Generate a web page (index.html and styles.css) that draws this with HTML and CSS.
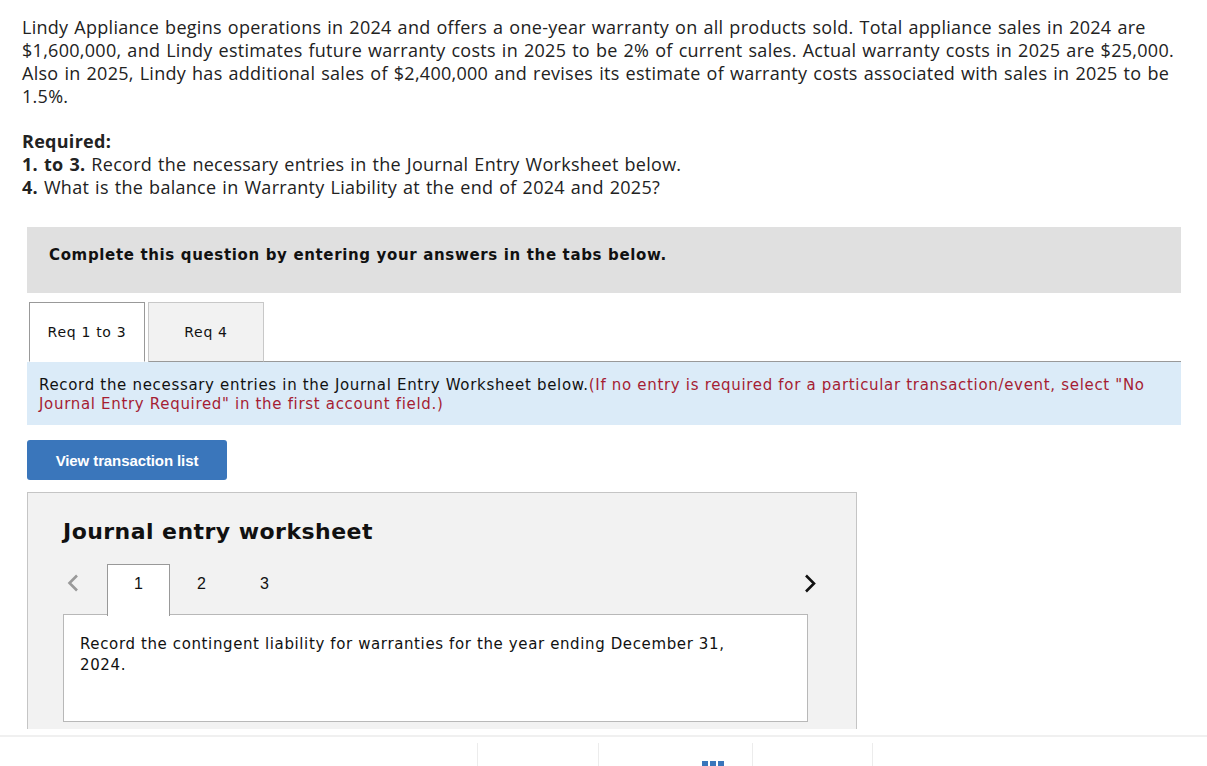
FILE: index.html
```html
<!DOCTYPE html>
<html>
<head>
<meta charset="utf-8">
<link rel="stylesheet" href="styles.css">
</head>
<body>
<div class="page">
  <div class="question">
    <p class="intro">Lindy Appliance begins operations in 2024 and offers a one-year warranty on all products sold. Total appliance sales in 2024 are $1,600,000, and Lindy estimates future warranty costs in 2025 to be 2% of current sales. Actual warranty costs in 2025 are $25,000. Also in 2025, Lindy has additional sales of $2,400,000 and revises its estimate of warranty costs associated with sales in 2025 to be 1.5%.</p>
    <p class="required"><strong>Required:</strong><br><strong>1. to 3.</strong> Record the necessary entries in the Journal Entry Worksheet below.<br><strong>4.</strong> What is the balance in Warranty Liability at the end of 2024 and 2025?</p>
  </div>

  <div class="work">
    <div class="notice">Complete this question by entering your answers in the tabs below.</div>

    <div class="tabs">
      <div class="tab active">Req 1 to 3</div>
      <div class="tab">Req 4</div>
      <div class="tab-fill"></div>
    </div>

    <div class="instructions">Record the necessary entries in the Journal Entry Worksheet below.<span class="hint">(If no entry is required for a particular transaction/event, select "No Journal Entry Required" in the first account field.)</span></div>

    <button class="btn">View transaction list</button>

    <div class="panel">
      <h2 class="panel-title">Journal entry worksheet</h2>
      <div class="nav">
        <span class="arrow prev"><svg width="14" height="18" viewBox="0 0 14 18"><path d="M11 1.5 L3.5 9 L11 16.5" fill="none" stroke="#9a9a9a" stroke-width="2.6"/></svg></span>
        <div class="step active">1</div>
        <div class="step">2</div>
        <div class="step">3</div>
        <span class="nav-fill"></span>
        <span class="arrow next"><svg width="13" height="19" viewBox="0 0 13 19"><path d="M2 1.5 L10 9.5 L2 17.5" fill="none" stroke="#111" stroke-width="2.6"/></svg></span>
      </div>
      <div class="entry">Record the contingent liability for warranties for the year ending December 31, 2024.</div>
    </div>
  </div>
</div>

<div class="footer">
  <div class="footer-rule"></div>
  <div class="footer-row">
    <div class="cell"></div>
    <div class="cell wide"><span class="grid-icon"><i></i><i></i><i></i></span></div>
    <div class="cell"></div>
  </div>
</div>
</body>
</html>
```

FILE: styles.css
```css
* { box-sizing: border-box; }

body {
  margin: 0;
  background: #fff;
  color: #222;
  font-family: "Open Sans", "Lato", sans-serif;
}

.page {
  padding: 16px 26px 0 22px;
}

.question p {
  margin: 0;
  font-size: 18px;
  line-height: 23px;
  letter-spacing: 0.28px;
  word-spacing: 1px;
}

.intro {
  width: 1165px;
}

.question .required {
  margin-top: 22px;
}

.required strong {
  font-weight: 700;
}

.work {
  margin-left: 5px;
  margin-top: 28px;
  font-family: "DejaVu Sans", Verdana, sans-serif;
}

.notice {
  height: 66px;
  background: #e0e0e0;
  padding: 18px 22px 0;
  font-size: 15px;
  font-weight: 700;
  line-height: 20px;
  letter-spacing: 0.65px;
  color: #111;
}

.tabs {
  display: flex;
  margin-top: 9px;
  padding-left: 2px;
  height: 60px;
}

.tab {
  width: 116px;
  height: 60px;
  margin-right: 3px;
  border: 1px solid #c8c8c8;
  border-bottom: 1px solid #999;
  background: #f2f2f2;
  font-size: 14px;
  line-height: 58px;
  letter-spacing: 0.7px;
  text-align: center;
  color: #111;
}

.tab.active {
  border-color: #999;
  border-bottom-color: #fff;
  background: #fff;
}

.tab-fill {
  flex: 1;
  border-bottom: 1px solid #999;
  margin-left: -3px;
}

.instructions {
  background: #dbebf8;
  padding: 14px 12px 11px;
  font-size: 15px;
  line-height: 19px;
  letter-spacing: 0.68px;
  color: #111;
}

.hint {
  color: #a51d33;
}

.btn {
  display: block;
  margin-top: 15px;
  width: 200px;
  height: 40px;
  border: 0;
  border-radius: 3px;
  background: #3a76bb;
  color: #fff;
  font-family: "Liberation Sans", Arial, sans-serif;
  font-size: 15px;
  font-weight: 700;
  letter-spacing: -0.1px;
}

.panel {
  margin-top: 12px;
  width: 830px;
  height: 290px;
  background: #f2f2f2;
  border: 1px solid #c5c5c5;
  padding: 25px 49px 0 35px;
}

.panel-title {
  margin: 0;
  font-size: 22px;
  line-height: 28px;
  letter-spacing: 0.45px;
  font-weight: 700;
  color: #111;
}

.nav {
  display: flex;
  align-items: flex-start;
  margin-top: 18px;
  width: 757px;
  height: 51px;
}

.arrow {
  display: flex;
  align-items: center;
  height: 38px;
}

.arrow.prev {
  width: 44px;
  padding-left: 3px;
}

.nav-fill {
  flex: 1;
}

.arrow.next {
  width: 16px;
}

.step {
  width: 63px;
  height: 51px;
  font-family: "Liberation Sans", Arial, sans-serif;
  font-size: 16px;
  line-height: 38px;
  text-align: center;
  color: #111;
  border: 1px solid transparent;
  border-bottom: 0;
}

.step.active {
  background: #fff;
  border-color: #999;
  position: relative;
  z-index: 1;
  height: 52px;
}

.entry {
  width: 745px;
  height: 108px;
  margin-top: -1px;
  background: #fff;
  border: 1px solid #b8b8b8;
  padding: 19px 60px 0 16px;
  font-size: 15px;
  line-height: 21px;
  letter-spacing: 0.62px;
  color: #111;
}

.footer {
  position: fixed;
  left: 0;
  right: 0;
  bottom: 0;
  height: 37px;
  background: #fff;
}

.footer-rule {
  margin-top: 6px;
  height: 2px;
  background: #f0f0f0;
}

.footer-row {
  display: flex;
  margin-top: 6px;
  padding-left: 477px;
  height: 23px;
}

.cell {
  width: 121px;
  border-left: 1px solid #ececec;
}

.cell:last-child {
  width: 121px;
  border-right: 1px solid #ececec;
}

.cell.wide {
  width: 154px;
  padding-left: 103px;
  padding-top: 18px;
}

.grid-icon {
  display: flex;
  gap: 2px;
}

.grid-icon i {
  width: 6px;
  height: 6px;
  background: #3a76bb;
}
```
